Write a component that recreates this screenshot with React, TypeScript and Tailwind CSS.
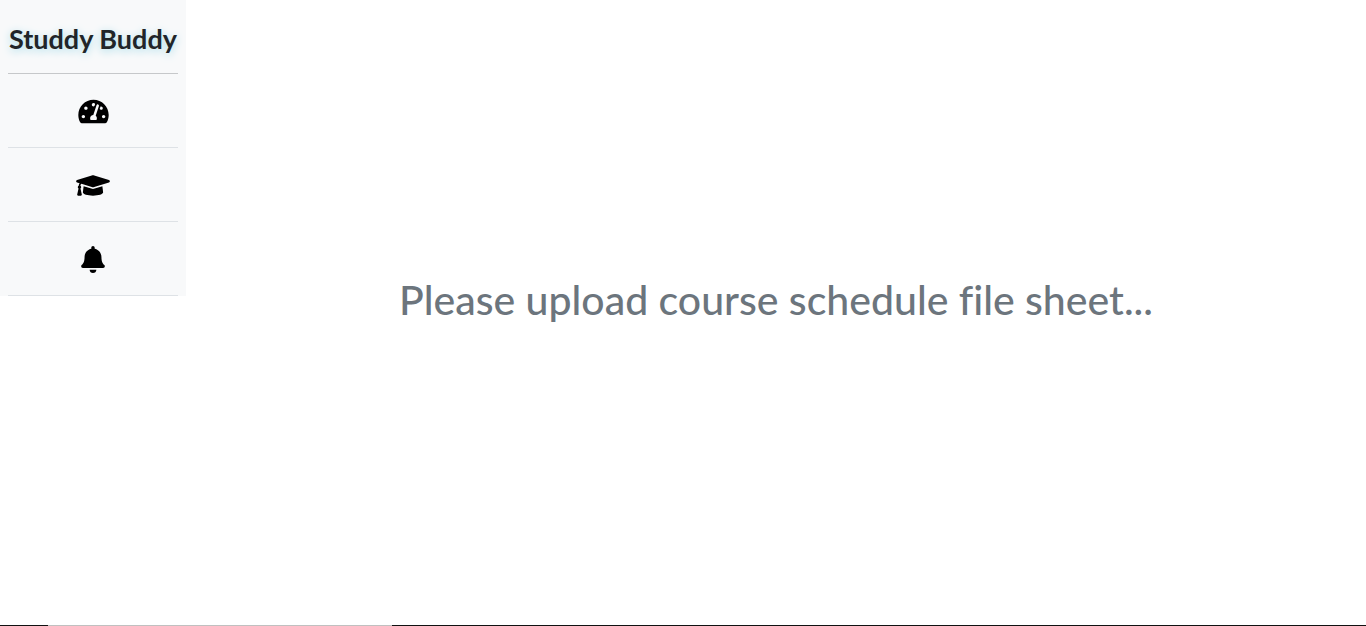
import { FaTachometerAlt, FaGraduationCap, FaBell } from "react-icons/fa";

const links = [
  { label: "Dashboard", href: "#dashboard", Icon: FaTachometerAlt, width: "w-[31px]" },
  { label: "Courses", href: "#courses", Icon: FaGraduationCap, width: "w-[34px]" },
  { label: "Notifications", href: "#notifications", Icon: FaBell, width: "w-[24px]" },
];

export default function App() {
  return (
    <div className="flex h-screen flex-col bg-white font-['Lato',sans-serif] text-[#212529] [font-variant-ligatures:none]">
      <div className="flex min-h-0 flex-1 items-start">
        <aside className="min-w-[186px] shrink-0 bg-[#f8f9fa] px-2">
          <h1 className="border-b border-[#c6c8ca] pt-5 pb-4 text-center text-[27px] leading-[37px] font-bold whitespace-nowrap [text-shadow:0_2px_8px_#a5dbe8]">
            Studdy Buddy
          </h1>
          <nav>
            <ul>
              {links.map(({ label, href, Icon, width }) => (
                <li key={href} className="border-b border-[#dee2e6]">
                  <a href={href} aria-label={label} className="flex h-[73px] items-center justify-center pt-0.5 text-black">
                    <Icon className={`h-[27px] ${width}`} aria-hidden="true" />
                  </a>
                </li>
              ))}
            </ul>
          </nav>
        </aside>
        <main className="flex flex-1 items-center justify-center self-stretch pb-[26px]">
          <p className="text-[41px] leading-[50px] font-medium text-[#6c757d]">Please upload course schedule file sheet...</p>
        </main>
      </div>
      <footer className="flex h-px bg-[#111111]">
        <div className="ml-12 w-[344px] bg-[#c0c0c0]" />
      </footer>
    </div>
  );
}
